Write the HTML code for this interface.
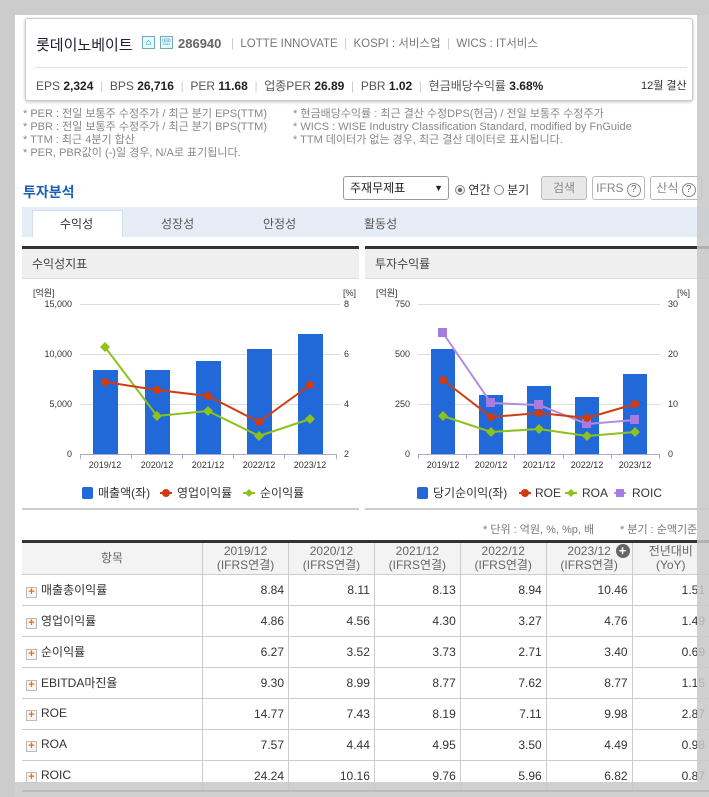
<!DOCTYPE html>
<html><head><meta charset="utf-8">
<style>
*{margin:0;padding:0;box-sizing:border-box}
body{width:709px;height:797px;background:#ccc;position:relative;overflow:hidden;font-family:"Liberation Sans","Noto Sans CJK KR",sans-serif;color:#333}
.a{position:absolute;white-space:nowrap}
#page{position:absolute;left:15px;top:15px;width:694px;height:782px;background:#fff}
.card{position:absolute;left:25px;top:18px;width:668px;height:83px;border:1px solid #ccc;border-radius:3px;box-shadow:0 1px 3px rgba(0,0,0,.25);background:#fff}
.sep{color:#ccc}
.note{font-size:11px;color:#888;line-height:13px}
.btn{position:absolute;top:176px;height:24px;border:1px solid #bbb;border-radius:3px;font-size:12px;color:#888;text-align:center;line-height:22px;background:#fff}
.q{display:inline-block;width:14px;height:14px;border:1px solid #888;border-radius:50%;font-size:10px;line-height:12px;text-align:center;color:#666}
table{position:absolute;left:22px;border-collapse:collapse;font-size:12px;color:#333}
td,th{border-bottom:1px solid #ccc;border-left:1px solid #ccc;height:31px;padding:0 4px;text-align:right}
th{font-weight:normal;background:#f3f3f3;color:#666;text-align:center;line-height:14px;font-size:12px}
td:first-child,th:first-child{border-left:none}
td:first-child{text-align:left;padding-left:4px}
.pl{display:inline-block;width:11px;height:11px;border:1px solid #bbb;background:#f6f6f6;color:#f60;font-size:11px;line-height:9px;text-align:center;font-weight:bold;vertical-align:-1px;margin-right:4px}
</style></head><body>
<div id="page"></div>
<div class="card"></div>
<div class="a" style="left:36px;top:34px;font-size:15px;color:#223;">롯데이노베이트</div>
<div class="a" style="left:142px;top:36px;width:13px;height:13px;border:1px solid #7aa;background:#dff;font-size:9px;color:#27c;text-align:center;line-height:11px">⌂</div>
<div class="a" style="left:160px;top:36px;width:13px;height:13px;border:1px solid #7aa;background:#dff;font-size:9px;color:#27c;text-align:center;line-height:11px">☏</div>
<div class="a" style="left:178px;top:36px;font-size:13px;color:#666;font-weight:bold">286940</div>
<div class="a" style="left:231px;top:35px;font-size:11.5px;color:#777"><span class="sep">|</span>&nbsp; LOTTE INNOVATE &nbsp;<span class="sep">|</span>&nbsp; KOSPI : 서비스업 &nbsp;<span class="sep">|</span>&nbsp; WICS : IT서비스</div>
<div class="a" style="left:36px;top:67px;width:651px;height:1px;background:#ddd"></div>
<div class="a" style="left:36px;top:77px;font-size:12px;color:#555">EPS <b style="color:#222">2,324</b> &nbsp;<span class="sep">|</span>&nbsp; BPS <b style="color:#222">26,716</b> &nbsp;<span class="sep">|</span>&nbsp; PER <b style="color:#222">11.68</b> &nbsp;<span class="sep">|</span>&nbsp; 업종PER <b style="color:#222">26.89</b> &nbsp;<span class="sep">|</span>&nbsp; PBR <b style="color:#222">1.02</b> &nbsp;<span class="sep">|</span>&nbsp; 현금배당수익률 <b style="color:#222">3.68%</b></div>
<div class="a" style="left:641px;top:77px;font-size:11px;color:#333">12월 결산</div>
<div class="a note" style="left:23px;top:108px">* PER : 전일 보통주 수정주가 / 최근 분기 EPS(TTM)<br>* PBR : 전일 보통주 수정주가 / 최근 분기 BPS(TTM)<br>* TTM : 최근 4분기 합산<br>* PER, PBR값이 (-)일 경우, N/A로 표기됩니다.</div>
<div class="a note" style="left:293px;top:108px">* 현금배당수익률 : 최근 결산 수정DPS(현금) / 전일 보통주 수정주가<br>* WICS : WISE Industry Classification Standard, modified by FnGuide<br>* TTM 데이터가 없는 경우, 최근 결산 데이터로 표시됩니다.</div>
<div class="a" style="left:23px;top:182px;font-size:14px;font-weight:bold;color:#1a5fb4">투자분석</div>
<div class="a" style="left:343px;top:176px;width:106px;height:24px;border:1px solid #999;border-radius:3px;font-size:12px;line-height:22px;padding-left:6px;color:#222">주재무제표<span style="position:absolute;right:5px;font-size:9px">▼</span></div>
<div class="a" style="left:455px;top:181px;font-size:12px;color:#333"><span style="display:inline-block;width:10px;height:10px;border:1px solid #888;border-radius:50%;background:radial-gradient(#666 35%,#eee 40%);vertical-align:-1px"></span> 연간 <span style="display:inline-block;width:10px;height:10px;border:1px solid #888;border-radius:50%;vertical-align:-1px"></span> 분기</div>
<div class="btn" style="left:541px;width:46px;background:#e8e8e8">검색</div>
<div class="btn" style="left:592px;width:53px">IFRS <span class="q">?</span></div>
<div class="btn" style="left:650px;width:52px">산식 <span class="q">?</span></div>
<div class="a" style="left:22px;top:207px;width:687px;height:30px;background:#e7edf7"></div>
<div class="a" style="left:32px;top:210px;width:91px;height:27px;background:#fff;border:1px solid #d5dde9;border-bottom:none"></div>
<div class="a" style="left:60px;top:215px;font-size:12px;color:#333">수익성</div>
<div class="a" style="left:161px;top:215px;font-size:12px;color:#555">성장성</div>
<div class="a" style="left:263px;top:215px;font-size:12px;color:#555">안정성</div>
<div class="a" style="left:364px;top:215px;font-size:12px;color:#555">활동성</div>

<svg class="a" style="left:0;top:0" width="709" height="797" font-family="Liberation Sans,Noto Sans CJK KR,sans-serif">
<rect x="22" y="248" width="337" height="30" fill="#efefef"/><rect x="22" y="246" width="337" height="3" fill="#333"/><rect x="22" y="278" width="337" height="1" fill="#ddd"/>
<rect x="365" y="248" width="344" height="30" fill="#efefef"/><rect x="365" y="246" width="344" height="3" fill="#333"/><rect x="365" y="278" width="344" height="1" fill="#ddd"/>
<text x="32" y="268" font-size="12" fill="#444">수익성지표</text><text x="375" y="268" font-size="12" fill="#444">투자수익률</text>
<rect x="22" y="508" width="337" height="2" fill="#ccc"/><rect x="365" y="508" width="344" height="2" fill="#ccc"/>
<g font-size="9" fill="#333">
<text x="33" y="296">[억원]</text><text x="343" y="296">[%]</text>
<g text-anchor="end"><text x="72" y="307">15,000</text><text x="72" y="357">10,000</text><text x="72" y="407">5,000</text><text x="72" y="457">0</text></g>
<text x="344" y="307">8</text><text x="344" y="357">6</text><text x="344" y="407">4</text><text x="344" y="457">2</text>
</g>
<g stroke="#ddd"><line x1="80" y1="304.5" x2="340" y2="304.5"/><line x1="80" y1="354.5" x2="340" y2="354.5"/><line x1="80" y1="404.5" x2="340" y2="404.5"/></g>
<line x1="80" y1="454.5" x2="337" y2="454.5" stroke="#aac"/>
<g stroke="#aac"><line x1="80.5" y1="454" x2="80.5" y2="459"/><line x1="131.5" y1="454" x2="131.5" y2="459"/><line x1="182.5" y1="454" x2="182.5" y2="459"/><line x1="233.5" y1="454" x2="233.5" y2="459"/><line x1="284.5" y1="454" x2="284.5" y2="459"/><line x1="336.5" y1="454" x2="336.5" y2="459"/></g>
<g fill="#2168d8"><rect x="93" y="370" width="25" height="84"/><rect x="145" y="370" width="25" height="84"/><rect x="196" y="361" width="25" height="93"/><rect x="247" y="349" width="25" height="105"/><rect x="298" y="334" width="25" height="120"/></g>
<g font-size="9" fill="#333" text-anchor="middle"><text x="105" y="468">2019/12</text><text x="157" y="468">2020/12</text><text x="208" y="468">2021/12</text><text x="259" y="468">2022/12</text><text x="310" y="468">2023/12</text></g>
<polyline points="105,347 157,416 208,411 259,436 310,419" fill="none" stroke="#8cc21a" stroke-width="2"/>
<g fill="#8cc21a"><path d="M105,342 l5,5 -5,5 -5,-5z"/><path d="M157,411 l5,5 -5,5 -5,-5z"/><path d="M208,406 l5,5 -5,5 -5,-5z"/><path d="M259,431 l5,5 -5,5 -5,-5z"/><path d="M310,414 l5,5 -5,5 -5,-5z"/></g>
<polyline points="105,382 157,390 208,396 259,422 310,385" fill="none" stroke="#d23b0f" stroke-width="2"/>
<g fill="#d23b0f"><circle cx="105" cy="382" r="4"/><circle cx="157" cy="390" r="4"/><circle cx="208" cy="396" r="4"/><circle cx="259" cy="422" r="4"/><circle cx="310" cy="385" r="4"/></g>
<g font-size="12" fill="#333"><rect x="82" y="487" width="11" height="12" rx="2" fill="#2168d8"/><text x="98" y="497">매출액(좌)</text>
<line x1="160" y1="493" x2="172" y2="493" stroke="#d23b0f" stroke-width="2"/><circle cx="166" cy="493" r="4" fill="#d23b0f"/><text x="177" y="497">영업이익률</text>
<line x1="243" y1="493" x2="255" y2="493" stroke="#8cc21a" stroke-width="2"/><path d="M249,489 l4,4 -4,4 -4,-4z" fill="#8cc21a"/><text x="260" y="497">순이익률</text></g>
<g font-size="9" fill="#333">
<text x="376" y="296">[억원]</text><text x="677" y="296">[%]</text>
<g text-anchor="end"><text x="410" y="307">750</text><text x="410" y="357">500</text><text x="410" y="407">250</text><text x="410" y="457">0</text></g>
<text x="668" y="307">30</text><text x="668" y="357">20</text><text x="668" y="407">10</text><text x="668" y="457">0</text>
</g>
<g stroke="#ddd"><line x1="418" y1="304.5" x2="660" y2="304.5"/><line x1="418" y1="354.5" x2="660" y2="354.5"/><line x1="418" y1="404.5" x2="660" y2="404.5"/></g>
<line x1="418" y1="454.5" x2="659" y2="454.5" stroke="#aac"/>
<g stroke="#aac"><line x1="418.5" y1="454" x2="418.5" y2="459"/><line x1="466.5" y1="454" x2="466.5" y2="459"/><line x1="514.5" y1="454" x2="514.5" y2="459"/><line x1="563.5" y1="454" x2="563.5" y2="459"/><line x1="611.5" y1="454" x2="611.5" y2="459"/><line x1="659.5" y1="454" x2="659.5" y2="459"/></g>
<g fill="#2168d8"><rect x="431" y="349" width="24" height="105"/><rect x="479" y="395" width="24" height="59"/><rect x="527" y="386" width="24" height="68"/><rect x="575" y="397" width="24" height="57"/><rect x="623" y="374" width="24" height="80"/></g>
<g font-size="9" fill="#333" text-anchor="middle"><text x="443" y="468">2019/12</text><text x="491" y="468">2020/12</text><text x="539" y="468">2021/12</text><text x="587" y="468">2022/12</text><text x="635" y="468">2023/12</text></g>
<polyline points="443,333 491,403 539,405 587,424 635,420" fill="none" stroke="#b58de0" stroke-width="2"/>
<g fill="#a77ce0"><rect x="438" y="328" width="9" height="9"/><rect x="486" y="398" width="9" height="9"/><rect x="534" y="400" width="9" height="9"/><rect x="582" y="419" width="9" height="9"/><rect x="630" y="415" width="9" height="9"/></g>
<polyline points="443,416 491,432 539,429 587,436 635,432" fill="none" stroke="#8cc21a" stroke-width="2"/>
<g fill="#8cc21a"><path d="M443,411 l5,5 -5,5 -5,-5z"/><path d="M491,427 l5,5 -5,5 -5,-5z"/><path d="M539,424 l5,5 -5,5 -5,-5z"/><path d="M587,431 l5,5 -5,5 -5,-5z"/><path d="M635,427 l5,5 -5,5 -5,-5z"/></g>
<polyline points="443,380 491,417 539,413 587,418 635,404" fill="none" stroke="#d23b0f" stroke-width="2"/>
<g fill="#d23b0f"><circle cx="443" cy="380" r="4"/><circle cx="491" cy="417" r="4"/><circle cx="539" cy="413" r="4"/><circle cx="587" cy="418" r="4"/><circle cx="635" cy="404" r="4"/></g>
<g font-size="12" fill="#333"><rect x="417" y="487" width="11" height="12" rx="2" fill="#2168d8"/><text x="433" y="497">당기순이익(좌)</text>
<line x1="519" y1="493" x2="531" y2="493" stroke="#d23b0f" stroke-width="2"/><circle cx="525" cy="493" r="4" fill="#d23b0f"/><text x="535" y="497">ROE</text>
<line x1="565" y1="493" x2="577" y2="493" stroke="#8cc21a" stroke-width="2"/><path d="M571,489 l4,4 -4,4 -4,-4z" fill="#8cc21a"/><text x="582" y="497">ROA</text>
<line x1="614" y1="493" x2="626" y2="493" stroke="#b58de0" stroke-width="2"/><rect x="616" y="489" width="8" height="8" fill="#a77ce0"/><text x="632" y="497">ROIC</text></g>
</svg>

<div class="a" style="left:483px;top:521px;font-size:11px;color:#777">* 단위 : 억원, %, %p, 배</div>
<div class="a" style="left:620px;top:521px;font-size:11px;color:#777">* 분기 : 순액기준</div>
<div class="a" style="left:22px;top:540px;width:687px;height:3px;background:#333"></div>
<table style="top:543px">
<tr><th style="width:181px">항목</th><th style="width:86px">2019/12<br>(IFRS연결)</th><th style="width:86px">2020/12<br>(IFRS연결)</th><th style="width:86px">2021/12<br>(IFRS연결)</th><th style="width:86px">2022/12<br>(IFRS연결)</th><th style="width:86px;position:relative">2023/12<br>(IFRS연결)<span style="position:absolute;right:2px;top:1px;width:14px;height:14px;border-radius:50%;background:#666;color:#fff;font-size:13px;line-height:13px;font-weight:bold">+</span></th><th style="width:77px">전년대비<br>(YoY)</th></tr>
<tr><td><span class="pl">+</span>매출총이익률</td><td>8.84</td><td>8.11</td><td>8.13</td><td>8.94</td><td>10.46</td><td>1.51</td></tr>
<tr><td><span class="pl">+</span>영업이익률</td><td>4.86</td><td>4.56</td><td>4.30</td><td>3.27</td><td>4.76</td><td>1.49</td></tr>
<tr><td><span class="pl">+</span>순이익률</td><td>6.27</td><td>3.52</td><td>3.73</td><td>2.71</td><td>3.40</td><td>0.69</td></tr>
<tr><td><span class="pl">+</span>EBITDA마진율</td><td>9.30</td><td>8.99</td><td>8.77</td><td>7.62</td><td>8.77</td><td>1.15</td></tr>
<tr><td><span class="pl">+</span>ROE</td><td>14.77</td><td>7.43</td><td>8.19</td><td>7.11</td><td>9.98</td><td>2.87</td></tr>
<tr><td><span class="pl">+</span>ROA</td><td>7.57</td><td>4.44</td><td>4.95</td><td>3.50</td><td>4.49</td><td>0.98</td></tr>
<tr><td><span class="pl">+</span>ROIC</td><td>24.24</td><td>10.16</td><td>9.76</td><td>5.96</td><td>6.82</td><td>0.87</td></tr>
</table>
<div class="a" style="left:22px;top:790px;width:687px;height:2px;background:#777"></div>
<div class="a" style="left:0;top:0;width:709px;height:15px;background:#ccc"></div>
<div class="a" style="left:0;top:0;width:15px;height:797px;background:#ccc"></div>
<div class="a" style="left:697px;top:15px;width:12px;height:782px;background:rgba(200,200,200,.85)"></div>
<div class="a" style="left:15px;top:782px;width:682px;height:15px;background:rgba(200,200,200,.85)"></div>
</body></html>
